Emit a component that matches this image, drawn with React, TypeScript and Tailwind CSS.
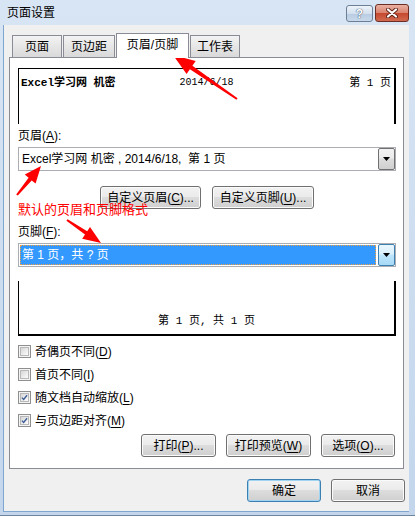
import React from "react";

type Pt = [number, number];

// red annotation arrow, tail -> tip
const arrowPoints = (tail: Pt, tip: Pt, head: number, half: number, neck: number, end: number) => {
  const dx = tip[0] - tail[0], dy = tip[1] - tail[1];
  const len = Math.hypot(dx, dy);
  const ux = dx / len, uy = dy / len, nx = -uy, ny = ux;
  const bx = tip[0] - ux * head, by = tip[1] - uy * head;
  const p = (x: number, y: number) => `${x.toFixed(1)},${y.toFixed(1)}`;
  return [
    p(tail[0] + nx * end, tail[1] + ny * end),
    p(bx + nx * neck, by + ny * neck),
    p(bx + nx * half, by + ny * half),
    p(tip[0], tip[1]),
    p(bx - nx * half, by - ny * half),
    p(bx - nx * neck, by - ny * neck),
    p(tail[0] - nx * end, tail[1] - ny * end),
  ].join(" ");
};

const U = ({ c }: { c: string }) => <span className="underline underline-offset-[2px]">{c}</span>;

const Btn = ({ children, w, focus }: { children: React.ReactNode; w: string; focus?: boolean }) => (
  <div
    className={`h-[23px] ${w} flex items-center justify-center rounded-[3px] border text-[12px] leading-none text-black bg-[linear-gradient(#f2f2f2_0%,#ebebeb_45%,#dddddd_50%,#cfcfcf_100%)] ${
      focus ? "border-[#3c7fb1] shadow-[inset_0_0_0_1px_#9fd5f3]" : "border-[#707070] shadow-[inset_0_0_0_1px_#fbfbfb]"
    }`}
  >
    {children}
  </div>
);

const DropArrow = () => (
  <svg width="7" height="4" viewBox="0 0 7 4">
    <path d="M0 0 H7 L3.5 4 Z" fill="#000" />
  </svg>
);

const Check = ({ on, children }: { on?: boolean; children: React.ReactNode }) => (
  <div className="h-[23px] flex items-center gap-[4px]">
    <div className="w-[13px] h-[13px] border border-[#8e8f8f] bg-[#f4f4f4] p-[1px]">
      <div className="w-full h-full border border-[#b8b8b8] bg-[linear-gradient(135deg,#d6d6d6,#fdfdfd)] flex items-center justify-center">
        {on && (
          <svg width="9" height="9" viewBox="0 0 9 9">
            <path d="M1.2 4.6 L3.4 7 L7.8 1.6" fill="none" stroke="#3d5a95" strokeWidth="1.7" />
          </svg>
        )}
      </div>
    </div>
    <span className="text-[12px] leading-none">{children}</span>
  </div>
);

const Tab = ({ label, w, active }: { label: string; w: string; active?: boolean }) =>
  active ? (
    <div className={`${w} h-[25px] -mb-px relative z-10 bg-white border border-b-0 border-[#898c95] flex items-center justify-center pb-[2px] text-[12px]`}>
      {label}
    </div>
  ) : (
    <div className={`${w} h-[22px] bg-[linear-gradient(#f3f3f3,#d9d9d9)] border border-b-0 border-[#898c95] flex items-center justify-center text-[12px]`}>
      {label}
    </div>
  );

const App = () => {
  return (
    <div className="w-[415px] h-[516px] relative flex flex-col bg-[linear-gradient(#d8e5f4,#c3d6ec)] border-b border-[#6f859f] font-['Liberation_Sans','Noto_Sans_CJK_SC',sans-serif] text-black select-none">
      {/* title bar */}
      <div className="h-[25px] flex items-center pl-[7px] pr-[6px]">
        <span className="text-[12px] leading-none flex-1">页面设置</span>
        <div className="flex items-start gap-[2px] self-start pt-[4px]">
          <div className="w-[27px] h-[17px] mt-[1px] rounded-[3px] border border-[#6d7f96] bg-[linear-gradient(#eef3f9_0%,#d3e0ef_50%,#b8cbe1_51%,#c9d9eb_100%)] flex items-center justify-center text-[12px] font-bold leading-none text-white [text-shadow:0_0_1px_#3b4a60,0_0_1px_#3b4a60]">
            ?
          </div>
          <div className="w-[34px] h-[18px] rounded-[3px] border border-[#6b2d24] bg-[linear-gradient(#eab1a3_0%,#d9826d_50%,#c6482f_51%,#d06a4f_100%)] flex items-center justify-center">
            <svg width="12" height="10" viewBox="0 0 12 10">
              <path d="M2 1.5 L10 8.5 M10 1.5 L2 8.5" stroke="#5c2118" strokeWidth="4" strokeLinecap="round" />
              <path d="M2 1.5 L10 8.5 M10 1.5 L2 8.5" stroke="#fff" strokeWidth="2.2" strokeLinecap="round" />
            </svg>
          </div>
        </div>
      </div>

      {/* client area */}
      <div className="flex-1 ml-[3px] mr-[6px] mb-[3px] bg-[#f0f0f0] border-l border-b border-[#7fa6cf] flex flex-col">
        {/* tabs */}
        <div className="flex items-end gap-[1px] pl-[8px] pt-[8px]">
          <Tab label="页面" w="w-[50px]" />
          <Tab label="页边距" w="w-[52px]" />
          <Tab label="页眉/页脚" w="w-[73px]" active />
          <Tab label="工作表" w="w-[50px]" />
        </div>

        {/* panel */}
        <div className="ml-[5px] w-[395px] h-[412px] border border-[#898c95] bg-white pl-[8px] pr-[7px] flex flex-col">
          {/* header preview */}
          <div className="mt-[10px] h-[56px] border-t border-l border-r-2 border-black pt-[7px] px-[2px] font-['Liberation_Mono','Noto_Sans_CJK_SC',monospace]">
            <div className="h-[14px] grid grid-cols-[1fr_auto_1fr] items-center leading-[14px]">
              <span className="text-[11px] font-bold whitespace-pre">Excel学习网 机密</span>
              <span className="text-[10px] whitespace-pre">2014/6/18</span>
              <span className="text-[11px] whitespace-pre justify-self-end pr-[1px]">第 1 页</span>
            </div>
          </div>

          <div className="mt-[4px] h-[16px] flex items-center text-[12px] leading-none">
            页眉(<U c="A" />):
          </div>
          <div className="mt-[3px] h-[24px] border border-[#abadb3] bg-white flex items-center">
            <span className="flex-1 pl-[3px] text-[12px] leading-none whitespace-pre">Excel学习网 机密 , 2014/6/18,  第 1 页</span>
            <div className="w-[17px] h-[22px] rounded-[2px] border border-[#707070] bg-[linear-gradient(#f2f2f2_0%,#ebebeb_45%,#dddddd_50%,#cfcfcf_100%)] flex items-center justify-center">
              <DropArrow />
            </div>
          </div>

          <div className="mt-[15px] flex justify-center gap-[11px]">
            <Btn w="w-[101px]">
              自定义页眉(<U c="C" />)...
            </Btn>
            <Btn w="w-[102px]">
              自定义页脚(<U c="U" />)...
            </Btn>
          </div>

          <div className="mt-[15px] h-[16px] flex items-center text-[12px] leading-none">
            页脚(<U c="F" />):
          </div>
          <div className="mt-[3px] h-[24px] border border-[#abadb3] bg-white flex items-center p-[1px]">
            <div className="flex-1 h-full mr-[2px] bg-[#3399ff] outline-1 outline-dotted outline-[#f0a040] -outline-offset-1 flex items-center pl-[2px] text-white text-[12px] leading-none whitespace-pre">
              第 1 页，共 ? 页
            </div>
            <div className="w-[17px] h-[22px] -my-[1px] -mr-[1px] rounded-[2px] border border-[#3c7fb1] bg-[linear-gradient(#eaf6fd_0%,#d9f0fc_45%,#bee6fd_50%,#a7d9f5_100%)] flex items-center justify-center">
              <DropArrow />
            </div>
          </div>

          {/* footer preview */}
          <div className="mt-[14px] h-[55px] border-l border-r-2 border-b-2 border-black flex items-end justify-center pb-[6px] font-['Liberation_Mono','Noto_Sans_CJK_SC',monospace] text-[11px] leading-[14px] whitespace-pre">
            第 1 页, 共 1 页
          </div>

          <div className="mt-[4px] flex flex-col">
            <Check>
              奇偶页不同(<U c="D" />)
            </Check>
            <Check>
              首页不同(<U c="I" />)
            </Check>
            <Check on>
              随文档自动缩放(<U c="L" />)
            </Check>
            <Check on>
              与页边距对齐(<U c="M" />)
            </Check>
          </div>

          <div className="mt-[2px] flex justify-end gap-[10px] pr-[1px]">
            <Btn w="w-[75px]">
              打印(<U c="P" />)...
            </Btn>
            <Btn w="w-[85px]">
              打印预览(<U c="W" />)
            </Btn>
            <Btn w="w-[74px]">
              选项(<U c="O" />)...
            </Btn>
          </div>
        </div>

        {/* OK / Cancel */}
        <div className="mt-[10px] flex justify-end gap-[10px] pr-[4px]">
          <Btn w="w-[74px]" focus>
            确定
          </Btn>
          <Btn w="w-[74px]">取消</Btn>
        </div>
      </div>

      {/* red annotations */}
      <div className="absolute inset-0 pointer-events-none">
        <svg width="415" height="516" className="absolute left-0 top-0">
          <polygon points={arrowPoints([237, 99], [173, 55], 22, 8, 2.2, 1)} fill="#ff0000" />
          <polygon points={arrowPoints([17, 195], [41, 166], 17, 7, 2, 1)} fill="#ff0000" />
          <polygon points={arrowPoints([67, 220], [101, 243], 18, 7, 2, 1)} fill="#ff0000" />
        </svg>
        <span className="absolute left-[18px] top-[201px] text-[13px] leading-[18px] text-[#ff0000]">默认的页眉和页脚格式</span>
      </div>
    </div>
  );
};

export default App;
